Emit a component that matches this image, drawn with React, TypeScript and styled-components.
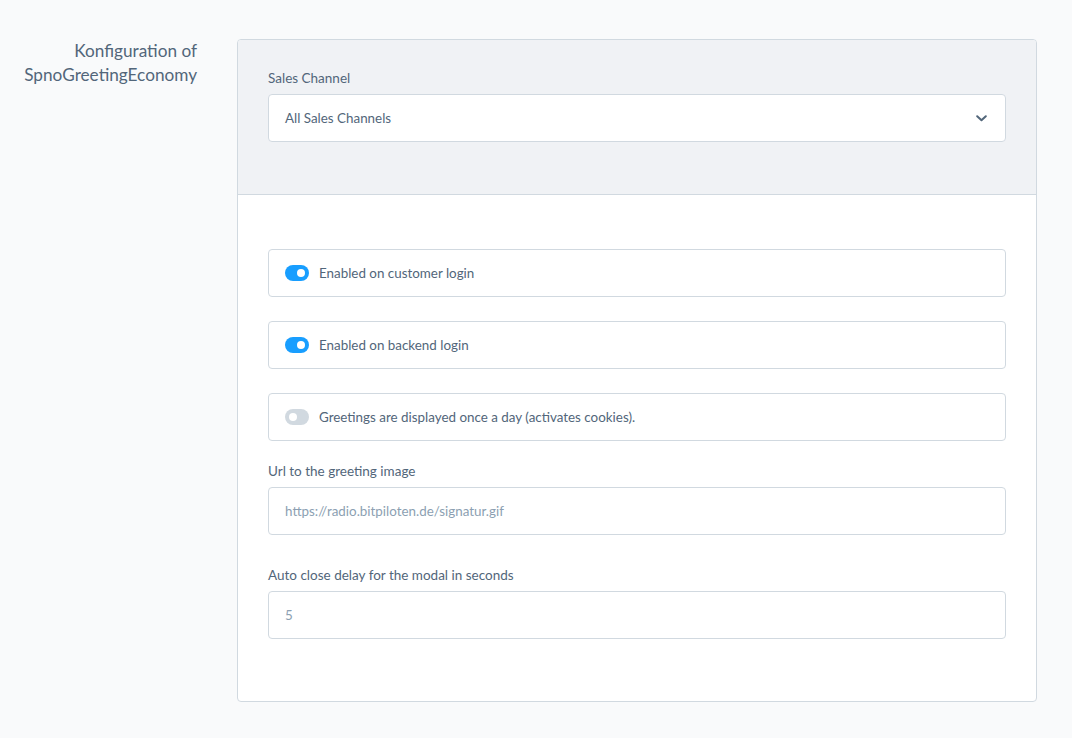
import React, { FC } from 'react';
import styled, { createGlobalStyle } from 'styled-components';

const GlobalStyle = createGlobalStyle`
  body {
    margin: 0;
    background-color: #f9fafb;
    font-family: 'Lato', 'Liberation Sans', sans-serif;
    color: #52667a;
  }
`;

const Toggle: FC<{ checked: boolean }> = ({ checked }) => (
  <Switch checked={checked}>
    <Knob checked={checked} />
  </Switch>
);

const ChevronDown = () => (
  <svg width="11" height="7" viewBox="0 0 11 7" fill="none">
    <path d="M1.2 1.2L5.5 5.3l4.3-4.1" stroke="#52667a" strokeWidth="2" strokeLinecap="round" strokeLinejoin="round" />
  </svg>
);

const App: FC = () => {
  const switches = [
    { label: 'Enabled on customer login', checked: true },
    { label: 'Enabled on backend login', checked: true },
    { label: 'Greetings are displayed once a day (activates cookies).', checked: false },
  ];

  return (
    <>
      <GlobalStyle />
      <Page>
        <Title>
          Konfiguration of
          <br />
          SpnoGreetingEconomy
        </Title>
        <Card>
          <Header>
            <Label>Sales Channel</Label>
            <Select>
              <span>All Sales Channels</span>
              <ChevronDown />
            </Select>
          </Header>
          <Body>
            <SwitchList>
              {switches.map((s) => (
                <SwitchBox key={s.label}>
                  <Toggle checked={s.checked} />
                  <SwitchLabel>{s.label}</SwitchLabel>
                </SwitchBox>
              ))}
            </SwitchList>
            <Field>
              <Label>Url to the greeting image</Label>
              <Input placeholder="https://radio.bitpiloten.de/signatur.gif" />
            </Field>
            <Field>
              <Label>Auto close delay for the modal in seconds</Label>
              <Input placeholder="5" />
            </Field>
          </Body>
        </Card>
      </Page>
    </>
  );
};

export default App;

const Page = styled.div`
  display: grid;
  grid-template-columns: 197px 800px;
  column-gap: 40px;
  align-items: start;
  padding-top: 39px;
`;
const Title = styled.div`
  text-align: right;
  font-size: 17.2px;
  line-height: 24px;
  color: #52667a;
`;
const Card = styled.div`
  box-sizing: border-box;
  width: 800px;
  border: 1px solid #d1d9e0;
  border-radius: 4px;
  background-color: #fff;
  overflow: hidden;
`;
const Header = styled.div`
  background-color: #f0f2f5;
  border-bottom: 1px solid #d1d9e0;
  padding: 30px 30px 52px;
`;
const Body = styled.div`
  padding: 54px 30px 62px;
`;
const Label = styled.div`
  font-size: 13.5px;
  line-height: 16px;
  margin-bottom: 8px;
  color: #52667a;
`;
const Select = styled.div`
  box-sizing: border-box;
  height: 48px;
  border: 1px solid #d1d9e0;
  border-radius: 4px;
  background-color: #fff;
  display: flex;
  align-items: center;
  justify-content: space-between;
  padding: 0 18px 0 16px;
  font-size: 13.4px;
  color: #52667a;
`;
const SwitchList = styled.div`
  display: flex;
  flex-direction: column;
  gap: 24px;
  margin-bottom: 22px;
`;
const SwitchBox = styled.div`
  box-sizing: border-box;
  height: 48px;
  border: 1px solid #d1d9e0;
  border-radius: 4px;
  display: flex;
  align-items: center;
  gap: 10px;
  padding: 0 16px;
`;
const Switch = styled.div<{ checked: boolean }>`
  position: relative;
  width: 24px;
  height: 16px;
  border-radius: 8px;
  background-color: ${({ checked }) => (checked ? '#189eff' : '#d1d9e0')};
  flex-shrink: 0;
`;
const Knob = styled.div<{ checked: boolean }>`
  position: absolute;
  top: 4px;
  left: ${({ checked }) => (checked ? '12px' : '4px')};
  width: 8px;
  height: 8px;
  border-radius: 50%;
  background-color: #fff;
`;
const SwitchLabel = styled.span`
  font-size: 13.4px;
  color: #52667a;
`;
const Field = styled.div`
  & + & {
    margin-top: 32px;
  }
`;
const Input = styled.input`
  box-sizing: border-box;
  display: block;
  width: 100%;
  height: 48px;
  border: 1px solid #d1d9e0;
  border-radius: 4px;
  padding: 0 16px;
  font-family: inherit;
  font-size: 13.4px;
  color: #52667a;
  outline: none;
  &::placeholder {
    color: #8c9fb2;
  }
`;
